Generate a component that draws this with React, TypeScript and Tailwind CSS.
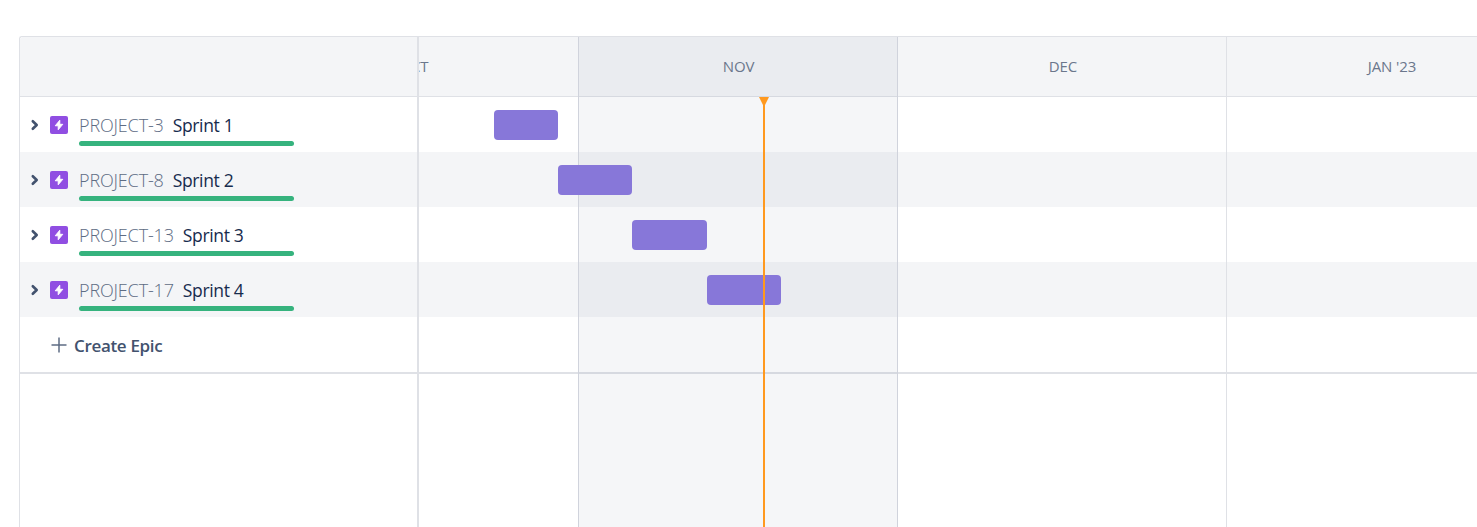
const epics = [
  { id: "PROJECT-3", name: "Sprint 1", start: 75, width: 64 },
  { id: "PROJECT-8", name: "Sprint 2", start: 139, width: 74 },
  { id: "PROJECT-13", name: "Sprint 3", start: 213, width: 75 },
  { id: "PROJECT-17", name: "Sprint 4", start: 288, width: 74 },
];

function Chevron() {
  return (
    <svg className="h-[12px] w-[10px] shrink-0" viewBox="0 0 10 12" fill="none" stroke="#42526e" strokeWidth="2.6" strokeLinecap="round" strokeLinejoin="round">
      <path d="M2.8 2.2 6.7 6 2.8 9.8" />
    </svg>
  );
}

function EpicIcon() {
  return (
    <svg className="ml-[10px] size-[18px] shrink-0" viewBox="0 0 18 18">
      <rect width="18" height="18" rx="2" fill="#904ee2" />
      <path d="M9.8 4.2v4.1h3L8.2 13.8V9.8H5.2z" fill="#fff" stroke="#fff" strokeWidth=".9" strokeLinejoin="round" />
    </svg>
  );
}

function EpicRow({ id, name }: { id: string; name: string }) {
  return (
    <div className="flex h-[55px] items-start pl-[10px] even:bg-[#f4f5f7]">
      <div className="flex h-[56px] items-center">
        <Chevron />
        <EpicIcon />
      </div>
      <div className="ml-[11px] w-[215px] pt-[16px]">
        <div className="flex h-[24px] items-center gap-[9px] whitespace-nowrap text-[18px] leading-6">
          <span className="font-[330] tracking-[-0.15px] text-[#5e6c84]">{id}</span>
          <span className="text-[17.5px] font-[370] tracking-[-0.35px] text-[#172b4d]">{name}</span>
        </div>
        <div className="mt-[4px] h-[5px] rounded-[3px] bg-[#36b37e]" />
      </div>
    </div>
  );
}

function Sidebar() {
  return (
    <div className="w-[399px] shrink-0 border-r-2 border-[#dfe1e6]">
      <div className="h-[60px] rounded-tl-[3px] border-b border-[#dfe1e6] bg-[#f4f5f7]" />
      <div>
        {epics.map((e) => (
          <EpicRow key={e.id} id={e.id} name={e.name} />
        ))}
      </div>
      <button className="flex h-[57px] w-full items-center border-b-2 border-[#dfe1e6] pl-[31px] pt-px text-[17px] text-[#42526e]">
        <svg className="size-[16px]" viewBox="0 0 16 16" stroke="#5e6c84" strokeWidth="1.5">
          <path d="M8 .5v15M.5 8h15" />
        </svg>
        <span className="ml-[7px] pt-px font-semibold tracking-[-0.33px]">Create Epic</span>
      </button>
    </div>
  );
}

function Timeline() {
  return (
    <div className="grid min-w-0 flex-1 grid-cols-1 grid-rows-1 overflow-hidden">
      <div className="col-start-1 row-start-1">
        <div className="h-[60px] border-b border-[#dfe1e6] bg-[#f4f5f7]" />
        <div>
          {epics.map((e) => (
            <div key={e.id} className="h-[55px] even:bg-[#f4f5f7]" />
          ))}
        </div>
        <div className="h-[57px] border-b-2 border-[#dfe1e6]" />
      </div>
      <div className="col-start-1 row-start-1 flex text-[15px] leading-[59px] tracking-[-0.1px] text-[#6b778c]">
        <div className="flex w-[159px] shrink-0 justify-end overflow-hidden">
          <span className="w-[328px] shrink-0 text-center">OCT</span>
        </div>
        <div className="w-[320px] shrink-0 border-x border-[#d0d3dc] bg-[#091e42]/[0.04] pl-px text-center">NOV</div>
        <div className="w-[329px] shrink-0 border-r border-[#dfe1e6] pl-[2px] text-center">DEC</div>
        <div className="w-[330px] shrink-0 text-center">JAN '23</div>
      </div>
      <div className="col-start-1 row-start-1 pt-[60px]">
        {epics.map((e) => (
          <div key={e.id} className="flex h-[55px] pt-[13px]">
            <div className="h-[30px] rounded-[4px] bg-[#8777d9]" style={{ marginLeft: e.start, width: e.width }} />
          </div>
        ))}
      </div>
      <div className="col-start-1 row-start-1 ml-[340px] flex w-[10px] flex-col items-center pt-[60px]">
        <svg className="h-[9px] w-[10px] shrink-0" viewBox="0 0 10 9">
          <path d="M0 0h10L6 8v1H4V8z" fill="#ff991f" />
        </svg>
        <div className="w-[2px] flex-1 bg-[#ff991f]" />
      </div>
    </div>
  );
}

export default function App() {
  return (
    <div className="h-[527px] overflow-hidden bg-white pl-[19px] pt-9 font-['Open_Sans','Noto_Sans',sans-serif]">
      <div className="flex h-[491px] rounded-tl-[3px] border-l border-t border-[#dfe1e6]">
        <Sidebar />
        <Timeline />
      </div>
    </div>
  );
}
